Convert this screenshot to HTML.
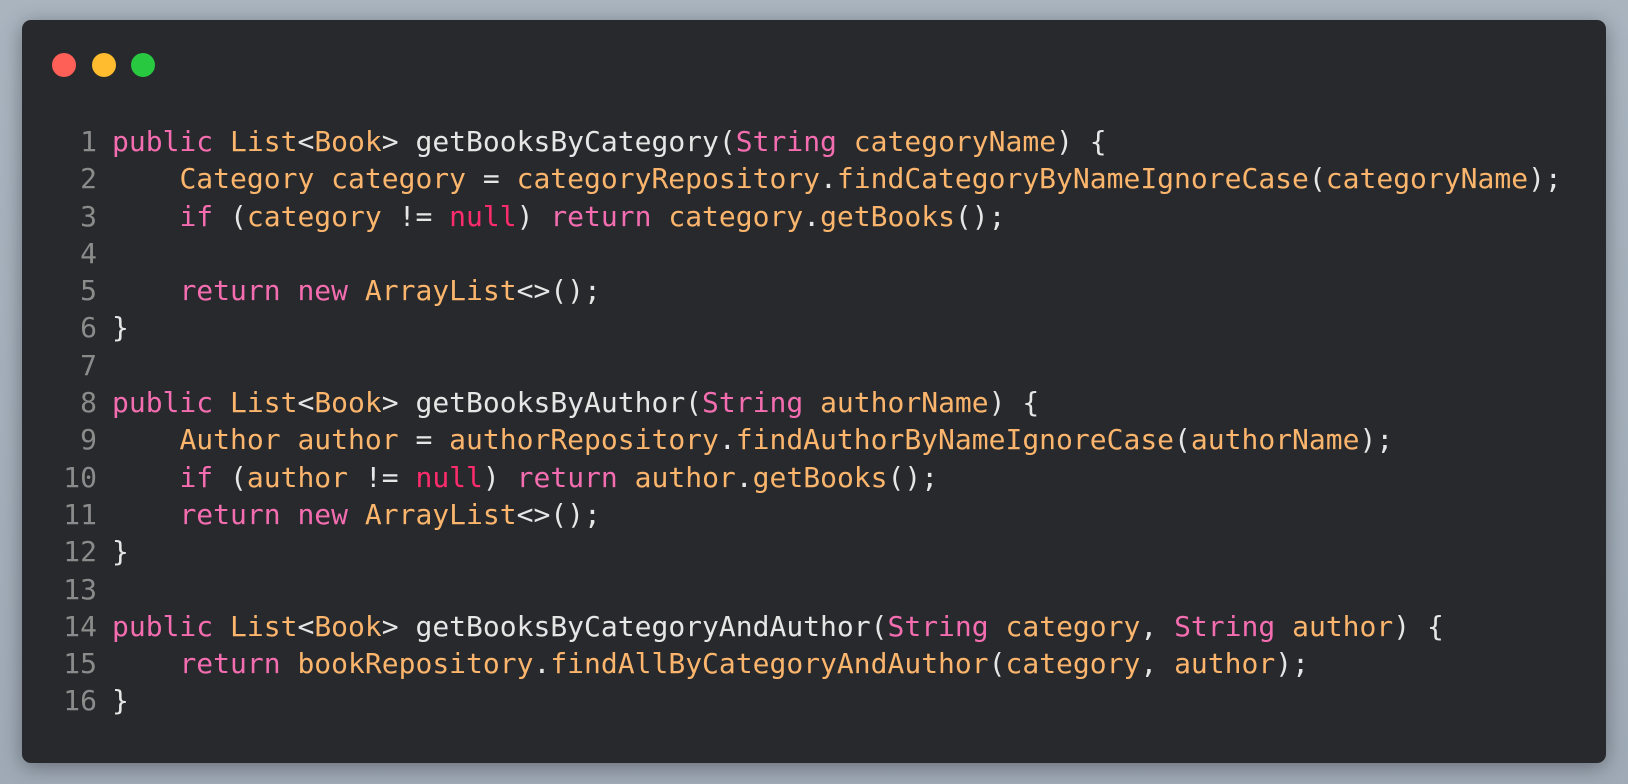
<!DOCTYPE html>
<html><head><meta charset="utf-8"><style>
html,body{margin:0;padding:0;width:1628px;height:784px;overflow:hidden}
body{background:linear-gradient(180deg,#a9b4bf,#9faab6)}
.win{position:absolute;left:22px;top:20px;width:1584px;height:743px;background:#28292c;border-radius:9px;box-shadow:0 4px 20px rgba(0,0,0,.35)}
.d{position:absolute;top:33px;width:24px;height:24px;border-radius:50%}
pre{position:absolute;left:0;top:123px;margin:0;font-family:"DejaVu Sans Mono","Liberation Mono",monospace;font-size:28px;line-height:37.3px;color:#e6e6e6;white-space:pre}
.n{color:#8b8b8b;display:inline-block;width:97px;text-align:right;margin-right:15px}
.k{color:#f36db0}.t{color:#fbb56c}.r{color:#ff2c6d}
</style></head><body>
<div class="win">
<div class="d" style="left:30px;background:#fe5f57"></div>
<div class="d" style="left:70px;background:#febc2e"></div>
<div class="d" style="left:109px;background:#28c840"></div>
</div>
<pre><span class="n">1</span><span class="k">public</span> <span class="t">List</span>&lt;<span class="t">Book</span>&gt; getBooksByCategory(<span class="k">String</span> <span class="t">categoryName</span>) {
<span class="n">2</span>    <span class="t">Category category</span> = <span class="t">categoryRepository</span>.<span class="t">findCategoryByNameIgnoreCase</span>(<span class="t">categoryName</span>);
<span class="n">3</span>    <span class="k">if</span> (<span class="t">category</span> != <span class="r">null</span>) <span class="k">return</span> <span class="t">category</span>.<span class="t">getBooks</span>();
<span class="n">4</span>
<span class="n">5</span>    <span class="k">return new</span> <span class="t">ArrayList</span>&lt;&gt;();
<span class="n">6</span>}
<span class="n">7</span>
<span class="n">8</span><span class="k">public</span> <span class="t">List</span>&lt;<span class="t">Book</span>&gt; getBooksByAuthor(<span class="k">String</span> <span class="t">authorName</span>) {
<span class="n">9</span>    <span class="t">Author author</span> = <span class="t">authorRepository</span>.<span class="t">findAuthorByNameIgnoreCase</span>(<span class="t">authorName</span>);
<span class="n">10</span>    <span class="k">if</span> (<span class="t">author</span> != <span class="r">null</span>) <span class="k">return</span> <span class="t">author</span>.<span class="t">getBooks</span>();
<span class="n">11</span>    <span class="k">return new</span> <span class="t">ArrayList</span>&lt;&gt;();
<span class="n">12</span>}
<span class="n">13</span>
<span class="n">14</span><span class="k">public</span> <span class="t">List</span>&lt;<span class="t">Book</span>&gt; getBooksByCategoryAndAuthor(<span class="k">String</span> <span class="t">category</span>, <span class="k">String</span> <span class="t">author</span>) {
<span class="n">15</span>    <span class="k">return</span> <span class="t">bookRepository</span>.<span class="t">findAllByCategoryAndAuthor</span>(<span class="t">category</span>, <span class="t">author</span>);
<span class="n">16</span>}</pre>
</body></html>
